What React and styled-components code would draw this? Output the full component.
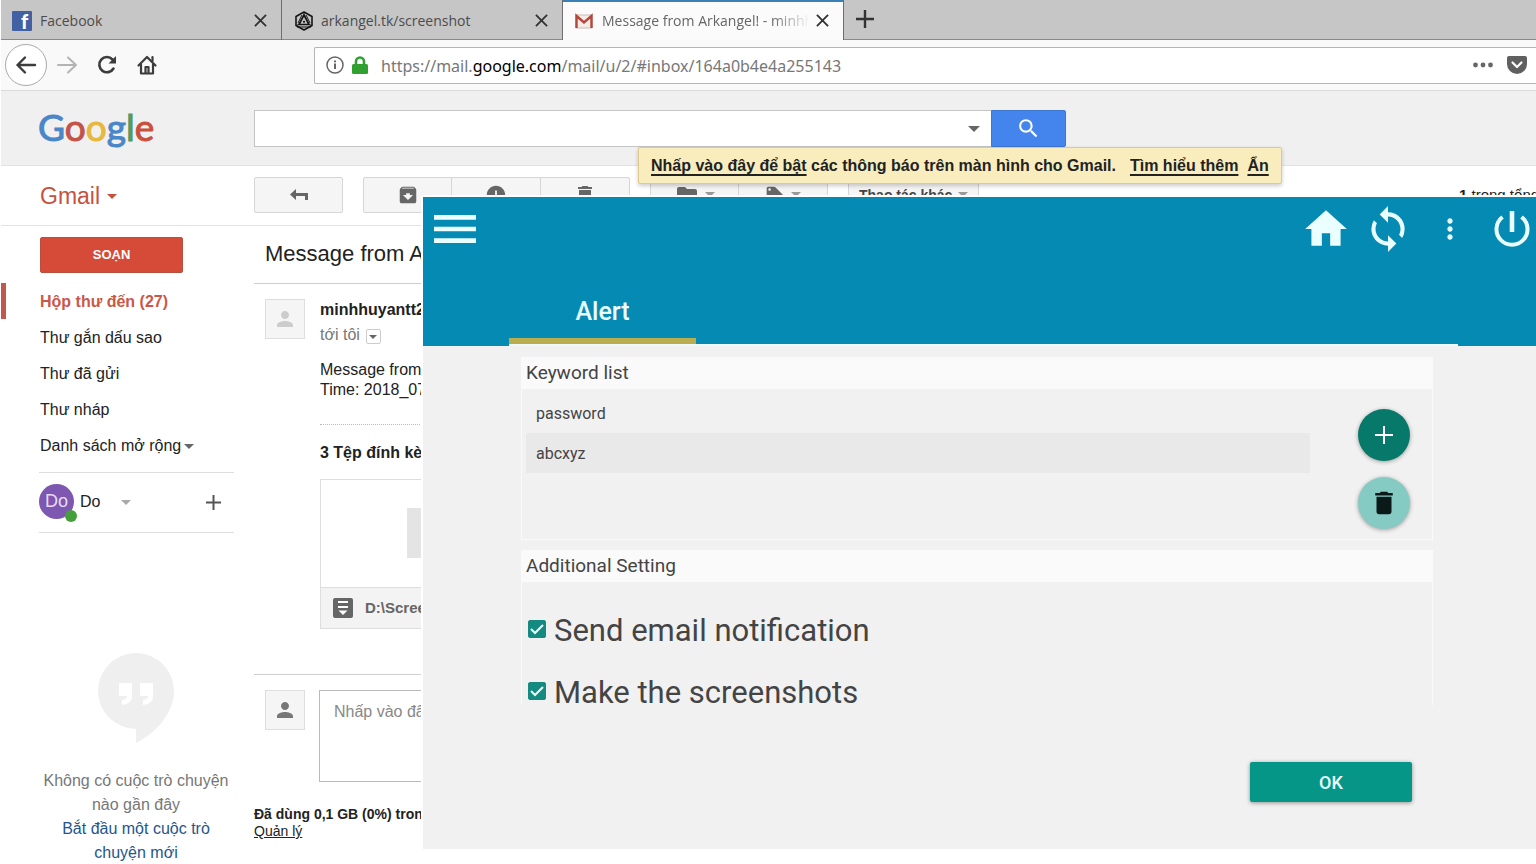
import React from "react";
import styled, { createGlobalStyle, css } from "styled-components";
import {
  MdHome, MdSync, MdMoreVert, MdMenu, MdDelete,
  MdArchive, MdError, MdFolder, MdLocalOffer, MdSearch, MdPerson,
} from "react-icons/md";

const GlobalStyle = createGlobalStyle`
  *, *::before, *::after { box-sizing: border-box; }
  body { margin: 0; background: #fff; color: #222; font: 16px/20px "Liberation Sans", Arial, sans-serif; }
  button, input, textarea { font: inherit; color: inherit; margin: 0; }
  button { padding: 0; border: 0; background: none; display: inline-flex; align-items: center; justify-content: center; }
  h1, h2, p, ul { margin: 0; padding: 0; font-weight: normal; }
  ul { list-style: none; }
  a { color: inherit; }
  svg { display: block; flex: none; overflow: visible; }
`;

const Page = styled.div`
  position: relative;
  min-height: 100vh;
  padding-left: 1px;
  overflow: hidden;
`;

/* ---------- browser chrome ---------- */
const TabBar = styled.div`
  display: flex;
  height: 40px;
  background: #c6c6c6;
  font: 14px/20px "Open Sans", "Noto Sans", sans-serif;
  color: #4c4c4c;
  box-shadow: inset 0 -1px #8a8a8a;
`;
const BrowserTab = styled.div`
  display: flex;
  align-items: center;
  gap: 8px;
  width: 281px;
  padding: 1px 13px 0 11px;
  border-right: 1px solid #6f6f6f;
  ${(p) => p.$active && css`
    background: #fbfbfb;
    box-shadow: inset 0 2px #3a7fb5;
    color: #666;
  `}
`;
const TabTitle = styled.span`
  flex: 1;
  min-width: 0;
  overflow: hidden;
  white-space: nowrap;
  ${(p) => p.$fade && css`
    margin-right: -6px;
    mask-image: linear-gradient(to right, #000 170px, transparent 208px);
  `}
`;
const SmallButton = styled.button`
  width: 16px;
  height: 20px;
  color: #333;
`;
const NewTab = styled(SmallButton)`
  width: 42px;
  height: 38px;
`;
const NavBar = styled.div`
  display: flex;
  align-items: center;
  height: 51px;
  padding-left: 4px;
  background: #f9f9fa;
  border-bottom: 1px solid #dcdcdc;
  color: #3c3c3c;
`;
const BackButton = styled.button`
  width: 42px;
  height: 42px;
  border: 1px solid #aaa;
  border-radius: 50%;
  background: #fff;
`;
const NavButton = styled.button`
  width: 40px;
  height: 40px;
  color: ${(p) => (p.$dim ? "#b4b4b4" : "#3c3c3c")};
`;
const AddressBar = styled.div`
  flex: 1;
  display: flex;
  align-items: center;
  gap: 8px;
  height: 37px;
  margin-left: 147px;
  padding: 0 7px 0 11px;
  border: 1px solid #b5b5b5;
  border-right: 0;
  border-radius: 2px 0 0 2px;
  background: #fff;
  font: 16px/24px "Noto Sans", "Open Sans", sans-serif;
  color: #777;
  b { font-weight: 400; color: #000; }
`;
const Url = styled.span`
  flex: 1;
  padding: 1px 0 0 5px;
  white-space: nowrap;
`;
const AddressAction = styled.button`
  width: 24px;
  height: 24px;
  margin-left: 2px;
`;

/* ---------- mail header ---------- */
const MailHeader = styled.header`
  display: grid;
  grid-template-columns: 253px 1fr;
  align-items: start;
  height: 75px;
  padding-top: 19px;
  background: #f0f0f0;
  border-bottom: 1px solid #e2e2e2;
`;
const GoogleLogo = styled.a`
  padding-left: 37px;
  font: 37px/34px Lato, sans-serif;
  text-decoration: none;
`;
const Letter = styled.span`
  color: ${(p) => p.$color};
  -webkit-text-stroke: 1px ${(p) => p.$color};
`;
const SearchForm = styled.form`
  display: flex;
  max-width: 812px;
`;
const SearchField = styled.div`
  flex: 1;
  display: flex;
  align-items: center;
  height: 37px;
  padding-right: 11px;
  border: 1px solid #c4c4c4;
  border-right: 0;
  background: #fff;
  input { flex: 1; border: 0; outline: 0; height: 32px; background: none; }
`;
const SearchButton = styled.button`
  width: 75px;
  height: 37px;
  border: 1px solid #3f76cf;
  border-radius: 0 2px 2px 0;
  background: #4485ed;
  color: #fff;
`;
const Caret = styled.span`
  display: inline-block;
  border: ${(p) => p.$size || 5}px solid transparent;
  border-top-color: ${(p) => p.$color || "#666"};
  border-bottom: 0;
`;
const Notice = styled.div`
  position: absolute;
  z-index: 2;
  top: 147px;
  left: 638px;
  display: flex;
  padding: 8px 12px;
  border: 1px solid #e0c98c;
  border-radius: 2px;
  background: #f9edbe;
  box-shadow: 0 2px 4px rgba(0, 0, 0, 0.2);
  font-weight: 700;
  line-height: 19px;
  white-space: nowrap;
  a { text-underline-offset: 3px; text-decoration-thickness: 2px; }
  a + a { margin-left: 9px; }
  span + a { margin-left: 14px; }
`;

/* ---------- mail toolbar ---------- */
const MailToolbar = styled.div`
  display: grid;
  grid-template-columns: 253px 1fr;
  align-items: center;
  height: 60px;
  padding-bottom: 1px;
  border-bottom: 1px solid #e2e2e2;
`;
const GmailMenu = styled.button`
  justify-self: start;
  gap: 7px;
  margin-left: 39px;
  padding-top: 2px;
  font-size: 23px;
  line-height: 28px;
  color: #c5523f;
`;
const Actions = styled.div`
  display: flex;
  align-items: center;
  gap: 20px;
  margin-top: -1px;
`;
const ButtonGroup = styled.div`
  display: flex;
  border: 1px solid #d6d6d6;
  border-radius: 2px;
  background: #f5f5f5;
`;
const ToolButton = styled.button`
  gap: 6px;
  min-width: ${(p) => (p.$first ? 87 : 89)}px;
  height: 34px;
  padding: 0 10px;
  font-size: 14px;
  font-weight: 700;
  color: ${(p) => (p.$text ? "#444" : "#666")};
  & + & { border-left: 1px solid #d6d6d6; }
`;
const Counter = styled.div`
  width: 77px;
  margin-left: auto;
  font-size: 15px;
  white-space: nowrap;
`;

/* ---------- mail columns ---------- */
const MailBody = styled.div`
  display: grid;
  grid-template-columns: 253px 1fr;
`;
const Sidebar = styled.nav`
  padding-top: 11px;
`;
const Compose = styled.button`
  width: 143px;
  height: 36px;
  margin: 0 0 10px 39px;
  border: 1px solid #b8503f;
  border-radius: 2px;
  background: #d64b38;
  color: #fff;
  font-size: 13px;
  font-weight: 700;
`;
const Folder = styled.li`
  height: 36px;
  padding-left: ${(p) => (p.$active ? 34 : 39)}px;
  border-left: ${(p) => (p.$active ? "5px solid #c0594b" : "0")};
  line-height: 38px;
  font-weight: ${(p) => (p.$active ? 700 : 400)};
  color: ${(p) => (p.$active ? "#cc5746" : "#222")};
  a { display: inline-flex; align-items: center; gap: 3px; text-decoration: none; }
`;
const ChatUser = styled.div`
  display: flex;
  align-items: center;
  height: 61px;
  margin: 9px 20px 0 38px;
  padding-bottom: 3px;
  border: solid #dfdfdf;
  border-width: 1px 0;
`;
const Avatar = styled.span`
  position: relative;
  width: 35px;
  height: 35px;
  margin-right: 6px;
  border-radius: 50%;
  background: #7e57b0;
  color: #e9dcf7;
  font: 18px/35px "Liberation Sans", sans-serif;
  text-align: center;
  &::after {
    content: "";
    position: absolute;
    right: -3px;
    bottom: -3px;
    width: 12px;
    height: 12px;
    border-radius: 50%;
    background: #45a03c;
  }
`;
const ChatName = styled.button`
  gap: 21px;
  padding-top: 2px;
`;
const AddChat = styled.button`
  margin: 3px 13px 0 auto;
  color: #555;
`;
const NoChats = styled.div`
  display: flex;
  flex-direction: column;
  align-items: center;
  width: 194px;
  margin: 120px 0 0 38px;
  line-height: 24px;
  text-align: center;
  color: #777;
  svg { margin-bottom: 26px; }
  a { color: #24568c; text-decoration: none; }
`;

const Thread = styled.main`
  min-width: 0;
  white-space: nowrap;
`;
const Subject = styled.h1`
  height: 58px;
  padding-left: 11px;
  border-bottom: 1px solid #cfcfcf;
  font-size: 22px;
  line-height: 56px;
`;
const MessageRow = styled.article`
  display: flex;
  gap: 15px;
  padding: 15px 0 0 11px;
`;
const Portrait = styled.div`
  display: flex;
  align-items: center;
  justify-content: center;
  width: 40px;
  height: 40px;
  border: 1px solid #dedede;
  background: #f5f5f5;
  color: ${(p) => p.$color};
`;
const MessageContent = styled.div`
  flex: 1;
  min-width: 0;
`;
const Sender = styled.p`
  font-weight: 700;
  line-height: 22px;
`;
const Recipient = styled.div`
  display: flex;
  align-items: center;
  gap: 6px;
  margin: 2px 0 13px;
  line-height: 24px;
  color: #777;
`;
const DetailsButton = styled.button`
  width: 15px;
  height: 15px;
  margin-top: 3px;
  border: 1px solid #ccc;
  border-radius: 2px;
`;
const MessageText = styled.div`
  height: 65px;
  border-bottom: 1px dotted #bbb;
`;
const AttachmentTitle = styled.h2`
  margin: 18px 0 16px;
  font-size: 16px;
  font-weight: 700;
`;
const Attachment = styled.div`
  width: 220px;
  border: 1px solid #dedede;
`;
const Preview = styled.div`
  display: flex;
  justify-content: center;
  height: 107px;
  padding-top: 28px;
  &::before { content: ""; width: 46px; height: 50px; background: #e4e4e4; }
`;
const FileName = styled.div`
  display: flex;
  align-items: center;
  gap: 12px;
  height: 41px;
  padding-left: 12px;
  border-top: 1px solid #dedede;
  background: #f3f3f3;
  color: #666;
  font-size: 15px;
  font-weight: 700;
`;
const Rule = styled.hr`
  height: 1px;
  margin: 45px 0 0;
  border: 0;
  background: #cfcfcf;
`;
const ReplyBox = styled.textarea`
  flex: 1;
  height: 92px;
  padding: 11px 14px;
  margin-left: -1px;
  border: 1px solid #bbb;
  resize: none;
  line-height: 20px;
  &::placeholder { color: #888; opacity: 1; }
`;
const Storage = styled.footer`
  padding-top: 24px;
  font-size: 14px;
  line-height: 17px;
  b { display: block; }
`;

/* ---------- alert window ---------- */
const AlertWindow = styled.section`
  position: absolute;
  z-index: 1;
  top: 195px;
  left: 421px;
  right: 0;
  border: solid #fff;
  border-width: 2px 0 0 2px;
  background: #f1f1f1;
  font-family: Roboto, sans-serif;
  color: #444;
`;
const AlertHeader = styled.header`
  background: #058ab3;
  color: #eaffff;
`;
const AlertToolbar = styled.div`
  display: flex;
  align-items: center;
  gap: 14px;
  height: 64px;
`;
const HeaderButton = styled.button`
  width: 48px;
  height: 62px;
`;
const MenuButton = styled(HeaderButton)`
  width: 63px;
  margin-right: auto;
`;
const TabStrip = styled.div`
  display: flex;
  align-items: flex-end;
  height: 85px;
  margin: 0 78px 0 86px;
  border-bottom: 2px solid #eefafa;
`;
const AlertTab = styled.button`
  width: 187px;
  padding-bottom: 11px;
  border-bottom: 6px solid #b9ad50;
  font-size: 25px;
  line-height: 30px;
  font-weight: 500;
`;
const AlertBody = styled.div`
  padding: 11px 103px 47px 98px;
`;
const Panel = styled.section`
  margin-bottom: 10px;
  border: solid #fafafa;
  border-width: 0 1px ${(p) => (p.$open ? 0 : 1)}px;
`;
const PanelTitle = styled.h2`
  padding: 0 4px;
  background: #fafafa;
  font-size: 19px;
  line-height: 32px;
`;
const KeywordArea = styled.div`
  display: flex;
  gap: 48px;
  padding: 4px 22px 10px 4px;
`;
const KeywordList = styled.ul`
  flex: 1;
`;
const Keyword = styled.li`
  height: 40px;
  padding: 0 10px;
  background: ${(p) => (p.$selected ? "#e9e9e9" : "transparent")};
  line-height: 41px;
`;
const KeywordActions = styled.div`
  display: flex;
  flex-direction: column;
  gap: 16px;
  padding-top: 16px;
`;
const RoundButton = styled.button`
  width: 52px;
  height: 52px;
  border-radius: 50%;
  background: ${(p) => (p.$light ? "#86cac4" : "#07796b")};
  color: ${(p) => (p.$light ? "#0b1a18" : "#fff")};
  box-shadow: 0 1px 4px rgba(0, 0, 0, 0.35);
`;
const Settings = styled.div`
  display: flex;
  flex-direction: column;
  align-items: flex-start;
  gap: 38px;
  padding: 37px 6px 0;
`;
const Option = styled.label`
  display: flex;
  align-items: center;
  gap: 8px;
  font-size: 31px;
  line-height: 24px;
`;
const CheckBox = styled.span`
  display: grid;
  width: 18px;
  height: 18px;
  margin-bottom: 4px;
  & > * { grid-area: 1 / 1; }
  input { appearance: none; width: 18px; height: 18px; border: 1px solid #148a80; border-radius: 2px; }
  input:checked { background: #148a80; }
  svg { place-self: center; pointer-events: none; visibility: hidden; }
  input:checked + svg { visibility: visible; }
`;
const OkButton = styled.button`
  display: flex;
  width: 162px;
  height: 40px;
  margin: 57px 21px 0 auto;
  padding-top: 2px;
  border-radius: 2px;
  background: #069688;
  color: #eaffff;
  font-size: 18px;
  font-weight: 500;
  box-shadow: 0 1px 4px rgba(0, 0, 0, 0.4);
`;

const CloseIcon = () => (
  <svg width="13" height="13" viewBox="0 0 14 14" stroke="currentColor" strokeWidth="2"><path d="M1 1 13 13M13 1 1 13" /></svg>
);
const PlusIcon = ({ size, width }) => (
  <svg width={size} height={size} viewBox="0 0 18 18" stroke="currentColor" strokeWidth={width}><path d="M9 0V18M0 9H18" /></svg>
);
const FacebookIcon = () => (
  <svg width="20" height="20" viewBox="0 0 20 20">
    <rect width="20" height="20" rx="1" fill="#4261a5" />
    <text x="9" y="18" fontSize="20" fontWeight="900" fontFamily="Lato, sans-serif" fill="#fff">f</text>
  </svg>
);
const ArkangelIcon = () => (
  <svg width="20" height="20" viewBox="0 0 20 20" fill="none" stroke="#151515" strokeLinejoin="round">
    <path d="M11 1 19 5.500V14.500L11 19 3 14.500V5.500Z" strokeWidth="1.600" />
    <path d="M11 4 6 13.500H16Z" strokeWidth="1.700" />
    <circle cx="11" cy="10.800" r="1.100" fill="#151515" stroke="none" />
    <path d="M3 14.500 6 13.500M19 14.500 16 13.500M11 1V4M4 16 18 16M5 12 9 4M17 12 13 4" strokeWidth="1" />
  </svg>
);
const MailIcon = () => (
  <svg width="20" height="20" viewBox="0 0 20 20">
    <path d="M2 4H18V17H2Z" fill="#f5ecea" stroke="#cdbab6" />
    <path d="M2.500 17V5L10 11.500 17.500 5V17" fill="none" stroke="#b5463a" strokeWidth="2.400" />
  </svg>
);
const ArrowIcon = ({ flip, width }) => (
  <svg width="20" height="18" viewBox="0 0 20 18" fill="none" stroke="currentColor" strokeWidth={width} strokeLinecap="round" strokeLinejoin="round">
    <path d={flip ? "M1 9H19M11 1.500 19 9 11 16.500" : "M19 9H1.500M9 1.500 1.500 9 9 16.500"} />
  </svg>
);
const ReloadIcon = () => (
  <svg width="20" height="20" viewBox="0 0 20 20" fill="none" stroke="currentColor" strokeWidth="2.600" strokeLinecap="round">
    <path d="M16.500 13.500A7.600 7.600 0 1 1 15.500 4.500" /><path d="M19 1V8.500H11.500Z" fill="currentColor" stroke="none" />
  </svg>
);
const BrowserHomeIcon = () => (
  <svg width="20" height="20" viewBox="0 0 20 20" fill="none" stroke="currentColor" strokeWidth="2.200" strokeLinecap="round" strokeLinejoin="round">
    <path d="M1.500 10.500 10 2 18.500 10.500M4 9.500V18.500H16V9.500" /><path d="M8.500 18V12H11.500V18" />
    <path d="M15.500 2V6" />
  </svg>
);
const InfoIcon = () => (
  <svg width="18" height="18" viewBox="0 0 18 18" fill="none" stroke="#666">
    <circle cx="9" cy="9" r="8" strokeWidth="1.500" /><path d="M9 7.500V13M9 4.500V6.300" strokeWidth="2" />
  </svg>
);
const LockIcon = () => (
  <svg width="16" height="19" viewBox="0 0 16 19">
    <path d="M4 9V5.500a4 4 0 0 1 8 0V9" fill="none" stroke="#30a030" strokeWidth="2.600" /><rect y="8" width="16" height="10" rx="1.500" fill="#30a030" />
  </svg>
);
const DotsIcon = () => (
  <svg width="20" height="6" viewBox="0 0 20 6" fill="#666"><circle cx="2.500" cy="3" r="2.400" /><circle cx="10" cy="3" r="2.400" /><circle cx="17.500" cy="3" r="2.400" /></svg>
);
const PocketIcon = () => (
  <svg width="20" height="18" viewBox="0 0 20 18"><path d="M2 0H18a2 2 0 0 1 2 2V8A10 10 0 0 1 0 8V2A2 2 0 0 1 2 0Z" fill="#606060" /><path d="M5.500 6.500 10 11 14.500 6.500" fill="none" stroke="#fff" strokeWidth="2.200" strokeLinecap="round" strokeLinejoin="round" /></svg>
);
const ReplyIcon = () => (
  <svg width="18" height="12" viewBox="0 0 18 12" fill="currentColor"><path d="M6 0V4H18V11H15V7H6V11L0 5.500Z" /></svg>
);
const DownloadIcon = () => (
  <svg width="20" height="20" viewBox="0 0 20 20"><rect width="20" height="20" rx="2" fill="#666" /><path d="M5 4H15M5 9H15" stroke="#fff" strokeWidth="2.200" /><path d="M5.500 12.500H14.500L10 17Z" fill="#fff" /></svg>
);
const HangoutsIcon = () => (
  <svg width="76" height="90" viewBox="0 0 76 90">
    <path d="M38 0a38 38 0 0 0 0 76V90C58 80 76 60 76 38A38 38 0 0 0 38 0Z" fill="#efefef" />
    <path d="M21 30H34V43Q34 51 24 52V47Q29 46 29 43H21ZM42 30H55V43Q55 51 45 52V47Q50 46 50 43H42Z" fill="#fff" />
  </svg>
);
const CheckIcon = () => (
  <svg width="18" height="18" viewBox="0 0 18 18" fill="none" stroke="#e8fffa" strokeWidth="2"><path d="M3 9 7 13 15 5" /></svg>
);
const PowerIcon = () => (
  <svg width="36" height="36" viewBox="0 0 36 36" fill="none" stroke="currentColor">
    <path d="M18 0V21" strokeWidth="4.600" /><path d="M8.500 6A15.500 15.500 0 1 0 27.500 6" strokeWidth="4" />
  </svg>
);

const logoLetters = [
  ["G", "#4a86c8"], ["o", "#c4534b"], ["o", "#e6b83e"], ["g", "#4a86c8"], ["l", "#569a5c"], ["e", "#c9503f"],
];
const folders = ["Hộp thư đến (27)", "Thư gắn dấu sao", "Thư đã gửi", "Thư nháp", "Danh sách mở rộng"];

function SettingOption({ children }) {
  return (
    <Option>
      <CheckBox>
        <input type="checkbox" defaultChecked />
        <CheckIcon />
      </CheckBox>
      {children}
    </Option>
  );
}

function Browser() {
  return (
    <>
      <TabBar>
        <BrowserTab><FacebookIcon /><TabTitle>Facebook</TabTitle><SmallButton aria-label="Close tab"><CloseIcon /></SmallButton></BrowserTab>
        <BrowserTab><ArkangelIcon /><TabTitle>arkangel.tk/screenshot</TabTitle><SmallButton aria-label="Close tab"><CloseIcon /></SmallButton></BrowserTab>
        <BrowserTab $active><MailIcon /><TabTitle $fade>Message from Arkangel! - minhhuy</TabTitle><SmallButton aria-label="Close tab"><CloseIcon /></SmallButton></BrowserTab>
        <NewTab aria-label="New tab"><PlusIcon size={18} width={2.4} /></NewTab>
      </TabBar>
      <NavBar>
        <BackButton aria-label="Back"><ArrowIcon width={2.4} /></BackButton>
        <NavButton $dim aria-label="Forward"><ArrowIcon flip width={2} /></NavButton>
        <NavButton aria-label="Reload"><ReloadIcon /></NavButton>
        <NavButton aria-label="Home"><BrowserHomeIcon /></NavButton>
        <AddressBar>
          <InfoIcon /><LockIcon />
          <Url>https://mail.<b>google.com</b>/mail/u/2/#inbox/164a0b4e4a255143</Url>
          <AddressAction aria-label="Page actions"><DotsIcon /></AddressAction>
          <AddressAction aria-label="Save to Pocket"><PocketIcon /></AddressAction>
        </AddressBar>
      </NavBar>
    </>
  );
}

function Mail() {
  return (
    <>
      <MailHeader>
        <GoogleLogo href="#" aria-label="Google">
          {logoLetters.map(([c, color], i) => <Letter key={i} $color={color}>{c}</Letter>)}
        </GoogleLogo>
        <SearchForm>
          <SearchField><input type="text" aria-label="Search mail" /><Caret $size={6} /></SearchField>
          <SearchButton type="button" aria-label="Search"><MdSearch size={25} /></SearchButton>
        </SearchForm>
      </MailHeader>
      <Notice>
        <a href="#">Nhấp vào đây để bật</a>
        <span>&nbsp;các thông báo trên màn hình cho Gmail.</span>
        <a href="#">Tìm hiểu thêm</a>
        <a href="#">Ẩn</a>
      </Notice>
      <MailToolbar>
        <GmailMenu>Gmail <Caret $color="#c5523f" /></GmailMenu>
        <Actions>
          <ButtonGroup><ToolButton $first aria-label="Reply"><ReplyIcon /></ToolButton></ButtonGroup>
          <ButtonGroup>
            <ToolButton $first aria-label="Archive"><MdArchive size={22} /></ToolButton>
            <ToolButton aria-label="Report spam"><MdError size={22} /></ToolButton>
            <ToolButton aria-label="Delete"><MdDelete size={24} /></ToolButton>
          </ButtonGroup>
          <ButtonGroup>
            <ToolButton $first aria-label="Move to"><MdFolder size={24} /><Caret $color="#999" /></ToolButton>
            <ToolButton aria-label="Labels"><MdLocalOffer size={20} /><Caret $color="#999" /></ToolButton>
          </ButtonGroup>
          <ButtonGroup><ToolButton $text>Thao tác khác <Caret $color="#999" /></ToolButton></ButtonGroup>
          <Counter><b>1</b> trong tổng số</Counter>
        </Actions>
      </MailToolbar>
      <MailBody>
        <Sidebar>
          <Compose>SOẠN</Compose>
          <ul>
            {folders.map((name, i) => (
              <Folder key={name} $active={i === 0}><a href="#">{name}{i === 4 && <Caret />}</a></Folder>
            ))}
          </ul>
          <ChatUser>
            <Avatar>Do</Avatar>
            <ChatName>Do <Caret $color="#aaa" /></ChatName>
            <AddChat aria-label="New conversation"><PlusIcon size={15} width={2.4} /></AddChat>
          </ChatUser>
          <NoChats>
            <HangoutsIcon />
            <p>Không có cuộc trò chuyện nào gần đây</p>
            <a href="#">Bắt đầu một cuộc trò chuyện mới</a>
          </NoChats>
        </Sidebar>
        <Thread>
          <Subject>Message from Arkangel!</Subject>
          <MessageRow>
            <Portrait $color="#ccc"><MdPerson size={24} /></Portrait>
            <MessageContent>
              <Sender>minhhuyantt2</Sender>
              <Recipient>tới tôi <DetailsButton aria-label="Show details"><Caret $size={4} /></DetailsButton></Recipient>
              <MessageText><p>Message from Arkangel!</p><p>Time: 2018_07</p></MessageText>
              <AttachmentTitle>3 Tệp đính kèm</AttachmentTitle>
              <Attachment>
                <Preview />
                <FileName><DownloadIcon />D:\Screenshot</FileName>
              </Attachment>
            </MessageContent>
          </MessageRow>
          <Rule />
          <MessageRow>
            <Portrait $color="#777"><MdPerson size={24} /></Portrait>
            <ReplyBox aria-label="Reply" placeholder="Nhấp vào đây để Trả lời" />
          </MessageRow>
          <Storage><b>Đã dùng 0,1 GB (0%) trong 15 GB</b><a href="#">Quản lý</a></Storage>
        </Thread>
      </MailBody>
    </>
  );
}

function Alert() {
  return (
    <AlertWindow>
      <AlertHeader>
        <AlertToolbar>
          <MenuButton aria-label="Menu"><MdMenu size={56} /></MenuButton>
          <HeaderButton aria-label="Home"><MdHome size={50} /></HeaderButton>
          <HeaderButton aria-label="Sync"><MdSync size={50} /></HeaderButton>
          <HeaderButton aria-label="More"><MdMoreVert size={32} /></HeaderButton>
          <HeaderButton aria-label="Power"><PowerIcon /></HeaderButton>
        </AlertToolbar>
        <TabStrip><AlertTab>Alert</AlertTab></TabStrip>
      </AlertHeader>
      <AlertBody>
        <Panel>
          <PanelTitle>Keyword list</PanelTitle>
          <KeywordArea>
            <KeywordList>
              <Keyword>password</Keyword>
              <Keyword $selected>abcxyz</Keyword>
            </KeywordList>
            <KeywordActions>
              <RoundButton aria-label="Add keyword"><PlusIcon size={18} width={2} /></RoundButton>
              <RoundButton $light aria-label="Delete keyword"><MdDelete size={30} /></RoundButton>
            </KeywordActions>
          </KeywordArea>
        </Panel>
        <Panel $open>
          <PanelTitle>Additional Setting</PanelTitle>
          <Settings>
            <SettingOption>Send email notification</SettingOption>
            <SettingOption>Make the screenshots</SettingOption>
          </Settings>
        </Panel>
        <OkButton>OK</OkButton>
      </AlertBody>
    </AlertWindow>
  );
}

export default function App() {
  return (
    <Page>
      <GlobalStyle />
      <Browser />
      <Mail />
      <Alert />
    </Page>
  );
}
